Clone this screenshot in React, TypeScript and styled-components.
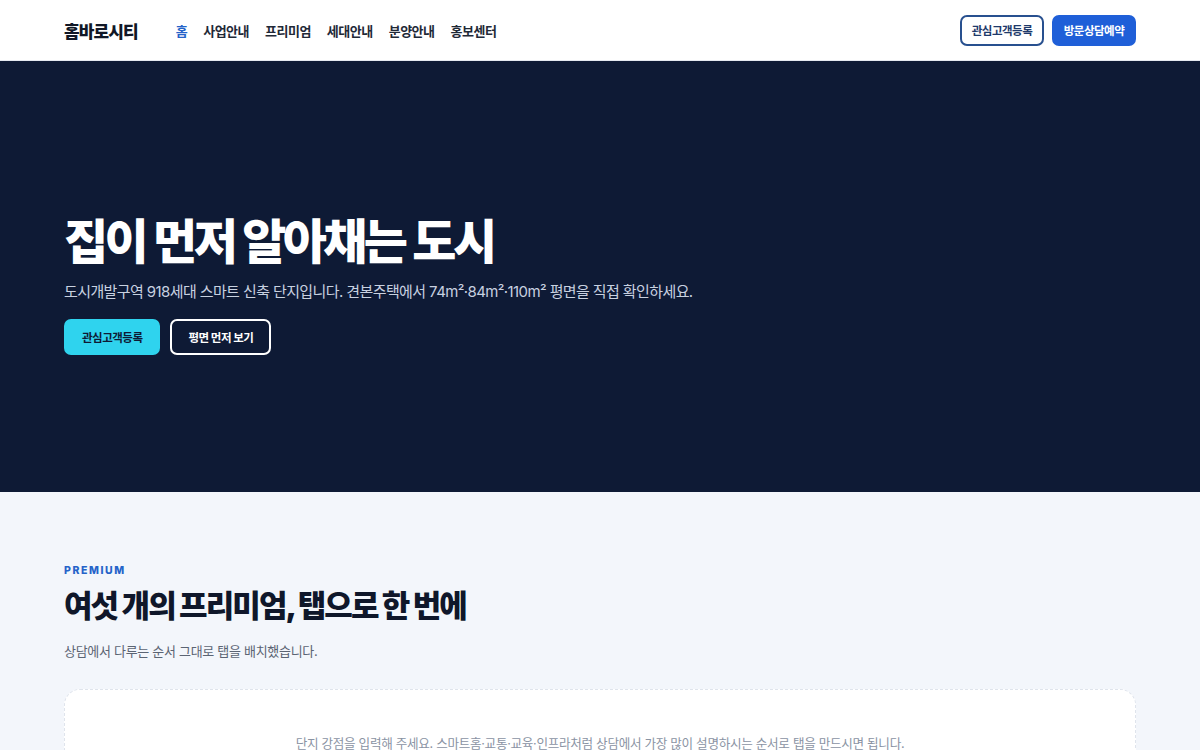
import styled, { createGlobalStyle } from "styled-components";

const GlobalStyle = createGlobalStyle`
  * { box-sizing: border-box; }
  body {
    margin: 0;
    font-family: Inter, "Noto Sans CJK KR", "Noto Sans", sans-serif;
    color: #0f172a;
    background: #f3f6fb;
  }
`;

const Header = styled.header`
  height: 61px;
  background: #ffffff;
  border-bottom: 1px solid #e5e9f0;
  display: flex;
  align-items: center;
  justify-content: space-between;
  padding: 0 64px;
`;

const HeaderLeft = styled.div`
  display: flex;
  align-items: center;
  gap: 38px;
`;

const Logo = styled.div`
  font-size: 17px;
  font-weight: 800;
  letter-spacing: -0.9px;
  color: #111827;
`;

const Nav = styled.nav`
  display: flex;
  gap: 16px;
`;

const NavLink = styled.a<{ $active?: boolean }>`
  font-size: 13px;
  font-weight: 700;
  letter-spacing: -0.5px;
  color: ${(p) => (p.$active ? "#2563c9" : "#1f2937")};
  text-decoration: none;
  cursor: pointer;
`;

const HeaderActions = styled.div`
  display: flex;
  gap: 8px;
`;

const HeaderBtn = styled.button<{ $filled?: boolean }>`
  height: 31px;
  width: 84px;
  padding: 0;
  border-radius: 7px;
  font-family: inherit;
  font-size: 11.5px;
  font-weight: 700;
  letter-spacing: -0.5px;
  cursor: pointer;
  border: 2px solid ${(p) => (p.$filled ? "#1f5fd8" : "#28508f")};
  background: ${(p) => (p.$filled ? "#1f5fd8" : "#ffffff")};
  color: ${(p) => (p.$filled ? "#ffffff" : "#1e3a6b")};
`;

const Hero = styled.section`
  height: 431px;
  background: #0e1a35;
  padding: 149px 64px 0;
`;

const HeroTitle = styled.h1`
  margin: 0;
  font-size: 48px;
  font-weight: 900;
  letter-spacing: -3.6px;
  word-spacing: 2px;
  line-height: 64px;
  color: #ffffff;
`;

const HeroText = styled.p`
  margin: 6px 0 0;
  font-size: 15px;
  line-height: 24px;
  letter-spacing: -0.6px;
  color: #c8d1e0;
`;

const HeroActions = styled.div`
  display: flex;
  gap: 10px;
  margin-top: 15px;
`;

const HeroBtn = styled.button<{ $primary?: boolean }>`
  height: 36px;
  padding: 0 16px;
  border-radius: 7px;
  font-family: inherit;
  font-size: 11.5px;
  font-weight: 700;
  letter-spacing: -0.5px;
  cursor: pointer;
  border: 2px solid ${(p) => (p.$primary ? "#2fd3ee" : "#ffffff")};
  background: ${(p) => (p.$primary ? "#2fd3ee" : "transparent")};
  color: ${(p) => (p.$primary ? "#0e1a35" : "#ffffff")};
`;

const Section = styled.section`
  padding: 72px 64px 0;
`;

const Eyebrow = styled.div`
  font-size: 10.5px;
  font-weight: 800;
  letter-spacing: 1.6px;
  color: #2563c9;
`;

const SectionTitle = styled.h2`
  margin: 7px 0 0;
  font-size: 31px;
  font-weight: 900;
  letter-spacing: -1.9px;
  line-height: 44px;
  color: #0f172a;
`;

const SectionText = styled.p`
  margin: 13px 0 0;
  font-size: 13px;
  letter-spacing: -0.3px;
  color: #5b6473;
`;

const TabsCard = styled.div`
  margin-top: 29px;
  height: 160px;
  background: #ffffff;
  border: 1px dashed #dfe4ec;
  border-radius: 16px;
  display: flex;
  justify-content: center;
  padding-top: 43px;
`;

const EmptyNote = styled.p`
  margin: 0;
  font-size: 12.6px;
  letter-spacing: -0.3px;
  color: #8a93a3;
`;

const navItems = ["홈", "사업안내", "프리미엄", "세대안내", "분양안내", "홍보센터"];

export default function App() {
  return (
    <>
      <GlobalStyle />
      <Header>
        <HeaderLeft>
          <Logo>홈바로시티</Logo>
          <Nav>
            {navItems.map((item, i) => (
              <NavLink key={item} $active={i === 0}>
                {item}
              </NavLink>
            ))}
          </Nav>
        </HeaderLeft>
        <HeaderActions>
          <HeaderBtn>관심고객등록</HeaderBtn>
          <HeaderBtn $filled>방문상담예약</HeaderBtn>
        </HeaderActions>
      </Header>

      <Hero>
        <HeroTitle>집이 먼저 알아채는 도시</HeroTitle>
        <HeroText>
          도시개발구역 918세대 스마트 신축 단지입니다. 견본주택에서 74m²·84m²·110m² 평면을 직접
          확인하세요.
        </HeroText>
        <HeroActions>
          <HeroBtn $primary>관심고객등록</HeroBtn>
          <HeroBtn>평면 먼저 보기</HeroBtn>
        </HeroActions>
      </Hero>

      <Section>
        <Eyebrow>PREMIUM</Eyebrow>
        <SectionTitle>여섯 개의 프리미엄, 탭으로 한 번에</SectionTitle>
        <SectionText>상담에서 다루는 순서 그대로 탭을 배치했습니다.</SectionText>
        <TabsCard>
          <EmptyNote>
            단지 강점을 입력해 주세요. 스마트홈·교통·교육·인프라처럼 상담에서 가장 많이 설명하시는
            순서로 탭을 만드시면 됩니다.
          </EmptyNote>
        </TabsCard>
      </Section>
    </>
  );
}
